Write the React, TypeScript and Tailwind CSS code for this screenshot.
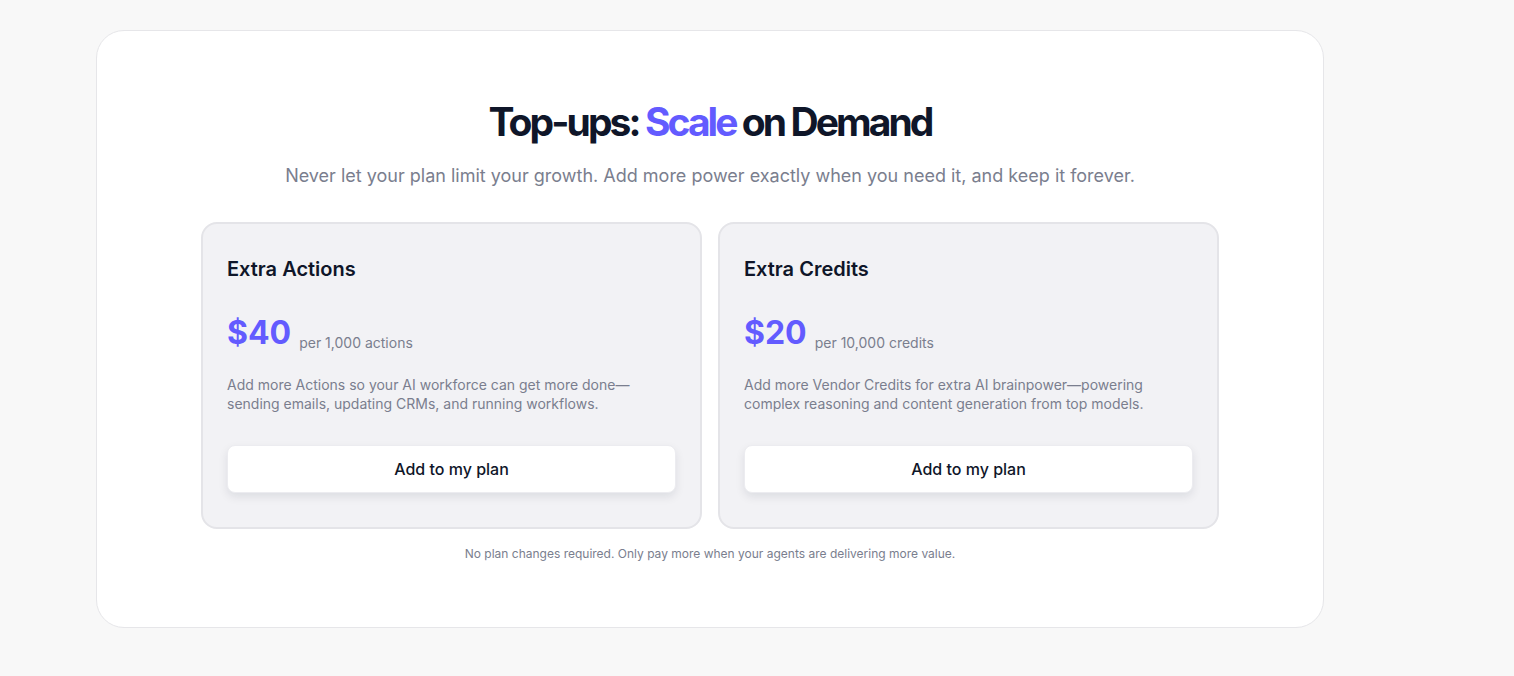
import React from "react";

interface TopUp {
  title: string;
  price: string;
  unit: string;
  description: string;
}

const topUps: TopUp[] = [
  {
    title: "Extra Actions",
    price: "$40",
    unit: "per 1,000 actions",
    description:
      "Add more Actions so your AI workforce can get more done—sending emails, updating CRMs, and running workflows.",
  },
  {
    title: "Extra Credits",
    price: "$20",
    unit: "per 10,000 credits",
    description:
      "Add more Vendor Credits for extra AI brainpower—powering complex reasoning and content generation from top models.",
  },
];

const TopUpCard: React.FC<{ item: TopUp }> = ({ item }) => (
  <div className="bg-[#f2f2f5] border-2 border-[#e4e4e8] rounded-2xl px-6 pt-[31px] pb-[34px] flex flex-col">
    <h3 className="text-[20px] leading-7 font-semibold text-[#0f1629]">{item.title}</h3>
    <div className="mt-[30px] flex items-end gap-2">
      <span className="text-[32px] leading-10 font-bold text-[#635bff]">{item.price}</span>
      <span className="text-sm leading-5 text-[#7a7e8e]">{item.unit}</span>
    </div>
    <p className="mt-[22px] text-sm leading-[19px] text-[#7a7e8e]">{item.description}</p>
    <button className="mt-8 w-full h-12 bg-white rounded-lg border border-[#ececf0] shadow-[0_4px_10px_rgba(15,22,41,0.09)] text-base font-medium text-[#0f1629]">
      Add to my plan
    </button>
  </div>
);

export default function App() {
  return (
    <div className="min-h-screen bg-[#f8f8f8] pt-[30px] pl-[96px] pb-10" style={{ fontFamily: "Inter, 'Noto Sans', sans-serif" }}>
      <div className="w-[1228px] bg-white border border-[#e6e6e9] rounded-[28px] pt-[67px] pb-[65px] flex flex-col items-center">
        <h1 className="text-[39px] leading-[48px] font-bold tracking-[-0.075em] text-[#0f1629]">
          Top-ups: <span className="text-[#635bff]">Scale</span> on Demand
        </h1>
        <p className="mt-4 text-lg leading-7 text-[#7a7e8e]">
          Never let your plan limit your growth. Add more power exactly when you need it, and keep it forever.
        </p>
        <div className="mt-8 w-[1018px] grid grid-cols-2 gap-4">
          {topUps.map((t) => (
            <TopUpCard key={t.title} item={t} />
          ))}
        </div>
        <p className="mt-[17px] text-xs leading-4 text-[#7a7e8e]">
          No plan changes required. Only pay more when your agents are delivering more value.
        </p>
      </div>
    </div>
  );
}
